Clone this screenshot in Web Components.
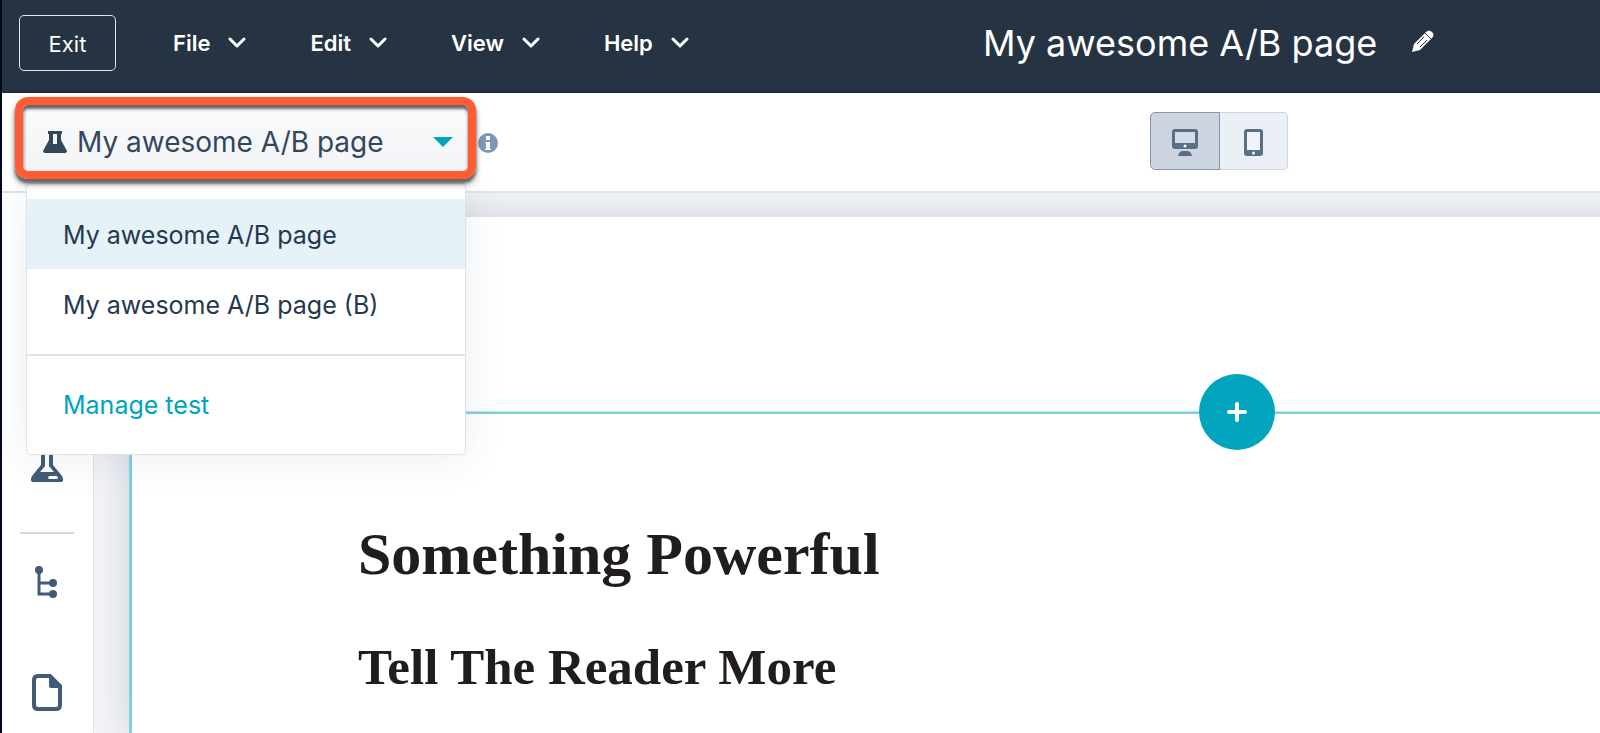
<!DOCTYPE html>
<html lang="en">
<head>
<meta charset="utf-8">
<title>My awesome A/B page</title>
<style>
	body {
		margin: 0;
		font-family: Inter, "Noto Sans", sans-serif;
		background: #00091f;
	}
</style>
</head>
<body>
<page-editor>
	<editor-header slot="header" title-text="My awesome A/B page">
		<header-menu>File</header-menu>
		<header-menu>Edit</header-menu>
		<header-menu>View</header-menu>
		<header-menu>Help</header-menu>
	</editor-header>
	<editor-toolbar slot="toolbar">
		<test-picker label="My awesome A/B page">
			<test-option selected>My awesome A/B page</test-option>
			<test-option>My awesome A/B page (B)</test-option>
			<a slot="footer" href="#manage">Manage test</a>
		</test-picker>
		<info-badge></info-badge>
		<device-toggle slot="center"></device-toggle>
	</editor-toolbar>
	<editor-sidebar slot="sidebar"></editor-sidebar>
	<page-canvas>
		<h1>Something Powerful</h1>
		<h2>Tell The Reader More</h2>
	</page-canvas>
</page-editor>

<script>
class BaseElement extends HTMLElement {
	constructor() {
		super();
		const template = document.createElement("template");
		template.innerHTML = this.constructor.markup;
		this._shadow = this.attachShadow({ mode: "open" });
		this._shadow.append(template.content.cloneNode(true));
	}
}

////////////////////////////////////////////// Layout //////////////////////////////////////////////

class PageEditor extends BaseElement {
	static markup = `
<style>
	:host {
		display: flex;
		flex-direction: column;
		min-height: 100vh;
		margin-left: 2px;
		background: white;
	}

	.main {
		flex: 1;
		display: flex;
	}

	.stage {
		flex: 1;
		display: flex;
		min-width: 0;
		padding: 24px 0 0 35px;
		background: #f3f4f7;
		overflow: hidden;
	}
</style>
<slot name="header"></slot>
<slot name="toolbar"></slot>
<div class="main">
	<slot name="sidebar"></slot>
	<div class="stage"><slot></slot></div>
</div>`;
}
customElements.define("page-editor", PageEditor);

////////////////////////////////////////////// Header //////////////////////////////////////////////

class EditorHeader extends BaseElement {
	static markup = `
<style>
	:host {
		display: flex;
		align-items: center;
		box-sizing: border-box;
		height: 93px;
		padding: 0 10% 6px 17px;
		color: white;
		background: #253342;
		border-bottom: 1px solid #16263a;
	}

	button {
		font: inherit;
		color: inherit;
		background: none;
		cursor: pointer;
	}

	.exit {
		width: 97px;
		height: 56px;
		padding: 2px 0 0;
		font-size: 22px;
		border: 1px solid #dfe3eb;
		border-radius: 5px;
	}

	nav {
		display: flex;
		gap: 64px;
		margin-left: 57px;
	}

	.title {
		display: flex;
		align-items: center;
		gap: 35px;
		margin-left: auto;
		font-size: 36px;
		white-space: nowrap;
	}

	.edit {
		display: flex;
		padding: 0 6px 4px 0;
		border: 0;
	}
</style>
<button class="exit">Exit</button>
<nav><slot></slot></nav>
<div class="title">
	<span></span>
	<button class="edit" aria-label="Rename page">
		<svg width="22" height="22" viewBox="0 0 22 22">
			<path d="M0 22 2 14 13 3 19 9 8 20Z" fill="white"/>
			<path d="M14 2Q17-1 20 2T20 8L19 9 13 3Z" fill="white"/>
			<path d="M5 14 12 7M8 17 15 10M13 3 19 9" stroke="#253342" fill="none"/>
		</svg>
	</button>
</div>`;

	connectedCallback() {
		this._shadow.querySelector(".title span").textContent = this.getAttribute("title-text");
	}
}
customElements.define("editor-header", EditorHeader);

class HeaderMenu extends BaseElement {
	static markup = `
<style>
	:host {
		display: block;
	}

	button {
		display: flex;
		align-items: center;
		gap: 18px;
		padding: 0;
		font: inherit;
		font-size: 22px;
		font-weight: 600;
		color: inherit;
		background: none;
		border: 0;
		cursor: pointer;
	}
</style>
<button>
	<slot></slot>
	<svg width="18" height="12" viewBox="0 0 18 12">
		<path d="M2 2 9 9 16 2" fill="none" stroke="white" stroke-width="3" stroke-linecap="round" stroke-linejoin="round"/>
	</svg>
</button>`;
}
customElements.define("header-menu", HeaderMenu);

////////////////////////////////////////////// Toolbar /////////////////////////////////////////////

class EditorToolbar extends BaseElement {
	static markup = `
<style>
	:host {
		display: flex;
		justify-content: space-between;
		box-sizing: border-box;
		height: 100px;
		padding: 4px 0 0 13px;
		padding-right: 19.5%;
		background: white;
		border-bottom: 2px solid #dfe3eb;
	}

	.start {
		display: flex;
		gap: 2px;
	}
</style>
<div class="start"><slot></slot></div>
<slot name="center"></slot>`;
}
customElements.define("editor-toolbar", EditorToolbar);

class TestPicker extends BaseElement {
	static markup = `
<style>
	:host {
		display: block;
		position: relative;
		z-index: 1;
		width: 461px;
		height: 82px;
	}

	.toggle {
		position: relative;
		z-index: 1;
		display: flex;
		align-items: center;
		width: 100%;
		height: 100%;
		padding: 8px 15px 0 20px;
		font: inherit;
		font-size: 28px;
		color: #33475b;
		background: linear-gradient(#f8fafb, #f3f4f7);
		border: 8px solid #ff5c35;
		border-radius: 13px;
		box-shadow: 0 4px 3px #666, 0 5px 6px #0006, inset 0 4px 3px #666, inset 3px 0 2px #dfe3eb;
		cursor: pointer;
	}

	.toggle span {
		flex: 1;
		margin-left: 10px;
		text-align: left;
		white-space: nowrap;
	}

	.menu {
		position: absolute;
		top: 86px;
		left: 11px;
		box-sizing: border-box;
		width: 440px;
		padding-top: 15px;
		font-size: 25px;
		color: #253850;
		background: white;
		border: 1px solid #dfe1ea;
		border-radius: 5px;
		box-shadow: 0 4px 40px #253f6018;
	}

	.footer {
		display: flex;
		align-items: center;
		height: 98px;
		margin-top: 15px;
		padding-left: 36px;
		border-top: 2px solid #e1e3eb;
	}

	::slotted(a) {
		color: #00a4bd;
		text-decoration: none;
	}
</style>
<button class="toggle" aria-haspopup="true" aria-expanded="true">
	<svg width="24" height="22" viewBox="0 0 24 22">
		<path fill="#33475b" fill-rule="evenodd" d="M5 0H19V3H18V9L24 20Q24 22 22 22H2Q0 22 0 20L6 9V3H5ZM10 3V13H14V3Z"/>
	</svg>
	<span></span>
	<svg width="20" height="10" viewBox="0 0 20 10"><path fill="#00a4bd" d="M0 0H20L10 10Z"/></svg>
</button>
<div class="menu">
	<slot></slot>
	<div class="footer"><slot name="footer"></slot></div>
</div>`;

	connectedCallback() {
		this._shadow.querySelector(".toggle span").textContent = this.getAttribute("label");

		this._shadow.querySelector(".toggle").addEventListener("click", () => {
			const domMenu = this._shadow.querySelector(".menu");
			domMenu.hidden = !domMenu.hidden;
		});
	}
}
customElements.define("test-picker", TestPicker);

class TestOption extends BaseElement {
	static markup = `
<style>
	:host {
		display: block;
	}

	button {
		display: block;
		width: 100%;
		height: 70px;
		padding: 2px 0 0 36px;
		font: inherit;
		color: inherit;
		text-align: left;
		background: none;
		border: 0;
		cursor: pointer;
	}

	:host([selected]) button {
		background: #e5f3f8;
	}
</style>
<button><slot></slot></button>`;
}
customElements.define("test-option", TestOption);

class InfoBadge extends BaseElement {
	static markup = `
<style>
	:host {
		display: flex;
		align-items: center;
		height: 92px;
	}
</style>
<svg width="20" height="20" viewBox="0 0 20 20" role="img" aria-label="Info">
	<circle cx="10" cy="10" r="10" fill="#7c98b6"/>
	<path fill="white" d="M8 3H12V7H8ZM7 9H12V16H13V17H7V16H8V10H7Z"/>
</svg>`;
}
customElements.define("info-badge", InfoBadge);

class DeviceToggle extends BaseElement {
	static markup = `
<style>
	:host {
		display: flex;
		margin-top: 15px;
		height: 58px;
	}

	button {
		display: flex;
		align-items: center;
		justify-content: center;
		box-sizing: border-box;
		width: 68px;
		padding: 2px 0 0;
		background: #eaf0f5;
		border: 1px solid #cbd6e2;
		border-left: 0;
		border-radius: 0 5px 5px 0;
		cursor: pointer;
	}

	button[aria-pressed="true"] {
		width: 70px;
		background: #cdd5e1;
		border: 1px solid #8296ad;
		border-radius: 5px 0 0 5px;
	}
</style>
<button aria-pressed="true" aria-label="Desktop">
	<svg width="26" height="27" viewBox="0 0 26 27">
		<rect width="26" height="20" rx="3" fill="#5b6f82"/>
		<rect x="3" y="3" width="20" height="11" fill="#d5dce6"/>
		<circle cx="13" cy="17" r="1.5" fill="white"/>
		<path d="M6 27Q7 22 11 22H15Q19 22 20 27Z" fill="#5b6f82"/>
	</svg>
</button>
<button aria-pressed="false" aria-label="Mobile">
	<svg width="19" height="27" viewBox="0 0 19 27">
		<rect width="19" height="27" rx="3" fill="#5b6f82"/>
		<rect x="3" y="3" width="13" height="18" fill="#f0f4f8"/>
		<circle cx="9.5" cy="24" r="1.5" fill="white"/>
	</svg>
</button>`;
}
customElements.define("device-toggle", DeviceToggle);

////////////////////////////////////////////// Sidebar /////////////////////////////////////////////

class EditorSidebar extends BaseElement {
	static markup = `
<style>
	:host {
		display: flex;
		flex-direction: column;
		align-items: center;
		box-sizing: border-box;
		width: 92px;
		padding: 249px 2px 0 0;
		background: white;
		border-right: 1px solid #dfe1e8;
	}

	button {
		display: flex;
		align-items: center;
		justify-content: center;
		width: 54px;
		height: 40px;
		padding: 0;
		background: none;
		border: 0;
		cursor: pointer;
	}

	hr {
		width: 54px;
		height: 2px;
		margin: 50px 0 28px;
		background: #d3d8e3;
		border: 0;
	}

	.pages {
		display: grid;
		gap: 70px;
	}
</style>
<button aria-label="Test">
	<svg width="34" height="40" viewBox="0 0 34 40">
		<path fill="#425b76" fill-rule="evenodd" d="M8 0H26V4H23V23L32 34Q35 40 30 40H4Q-1 40 2 34L11 23V4H8ZM15 4V24L10 30H24L19 24V4ZM20 34Q18 34 18 35.500T20 37H26Q28 37 28 35.500T26 34Z"/>
	</svg>
</button>
<hr>
<div class="pages">
	<button aria-label="Contents">
		<svg width="23" height="32" viewBox="0 0 23 32">
			<path d="M4 4V28H18M4 17H18" fill="none" stroke="#425b76" stroke-width="3"/>
			<g fill="#425b76"><circle cx="4" cy="4" r="4"/><circle cx="18" cy="17" r="4"/><circle cx="18" cy="28" r="4"/></g>
		</svg>
	</button>
	<button aria-label="Page">
		<svg width="30" height="37" viewBox="0 0 30 37">
			<path d="M6 2H18L28 12V31Q28 35 24 35H6Q2 35 2 31V6Q2 2 6 2Z" fill="none" stroke="#425b76" stroke-width="4"/>
			<path d="M17 2H20L29 11V14H19Q17 14 17 12Z" fill="#425b76"/>
		</svg>
	</button>
</div>`;
}
customElements.define("editor-sidebar", EditorSidebar);

////////////////////////////////////////////// Canvas //////////////////////////////////////////////

class PageCanvas extends BaseElement {
	static markup = `
<style>
	/* the canvas runs on past the right edge of the stage */
	:host {
		display: block;
		flex: 1;
		min-width: 0;
		margin-right: -40px;
		padding-top: 157px;
		background: white;
		border-left: 3px solid #7fd1de;
		box-shadow: 0 0 36px #253f6030;
	}

	.add {
		display: grid;
		grid-template-columns: 1067fr 76px 365fr;
		align-items: center;
	}

	.line {
		height: 2px;
		border-top: 1px solid #b9e5ec;
		background: #7fd1de;
	}

	button {
		display: flex;
		align-items: center;
		justify-content: center;
		height: 76px;
		padding: 0;
		background: #00a4bd;
		border: 0;
		border-radius: 50%;
		cursor: pointer;
	}

	.content {
		padding: 64px 0 0 226px;
		font-family: "Liberation Serif", serif;
		color: #211c1e;
	}

	::slotted(h1) {
		margin: 0;
		font-size: 60px;
		line-height: 80px;
	}

	::slotted(h2) {
		margin: 33px 0 0;
		font-size: 51px;
		line-height: 80px;
	}
</style>
<div class="add">
	<div class="line"></div>
	<button aria-label="Add section">
		<svg width="20" height="20" viewBox="0 0 20 20"><path d="M10 2V18M2 10H18" stroke="white" stroke-width="4" stroke-linecap="round"/></svg>
	</button>
	<div class="line"></div>
</div>
<div class="content"><slot></slot></div>`;
}
customElements.define("page-canvas", PageCanvas);
</script>
</body>
</html>
